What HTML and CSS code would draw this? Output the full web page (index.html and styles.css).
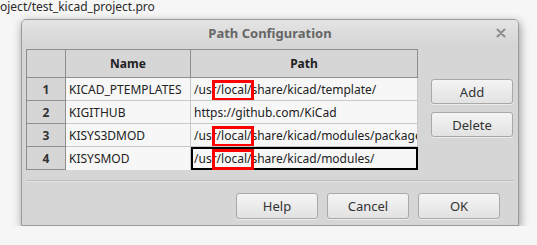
FILE: index.html
```html
<!DOCTYPE html>
<html lang="en">
<head>
    <meta charset="UTF-8">
    <title>Path Configuration</title>
    <link rel="stylesheet" href="styles.css">
</head>
<body>
    <div class="caption">oject/test_kicad_project.pro</div>
    <div class="dialog">
        <div class="titlebar">
            <span class="title">Path Configuration</span>
            <svg class="close" width="10" height="10" viewBox="0 0 10 10">
                <path d="M1.5 1.5 L8.5 8.5 M8.5 1.5 L1.5 8.5" stroke="#8c8c8c" stroke-width="2" stroke-linecap="round"/>
            </svg>
        </div>
        <div class="content">
            <div class="main">
                <table class="grid">
                    <thead>
                        <tr><th class="corner"></th><th class="col-name">Name</th><th class="col-path">Path</th></tr>
                    </thead>
                    <tbody>
                        <tr>
                            <th class="rownum">1</th>
                            <td>KICAD_PTEMPLATES</td>
                            <td class="path">/usr/local/share/kicad/template/<span class="mark"></span></td>
                        </tr>
                        <tr>
                            <th class="rownum">2</th>
                            <td>KIGITHUB</td>
                            <td class="path">https://github.com/KiCad</td>
                        </tr>
                        <tr>
                            <th class="rownum">3</th>
                            <td>KISYS3DMOD</td>
                            <td class="path">/usr/local/share/kicad/modules/packages3d/<span class="mark"></span></td>
                        </tr>
                        <tr>
                            <th class="rownum">4</th>
                            <td>KISYSMOD</td>
                            <td class="path selected">/usr/local/share/kicad/modules/<span class="mark"></span></td>
                        </tr>
                    </tbody>
                </table>
                <div class="side">
                    <button class="btn side-btn">Add</button>
                    <button class="btn side-btn">Delete</button>
                </div>
            </div>
            <div class="sep"></div>
            <div class="actions">
                <button class="btn">Help</button>
                <button class="btn">Cancel</button>
                <button class="btn">OK</button>
            </div>
        </div>
    </div>
</body>
</html>
```

FILE: styles.css
```css
body {
    margin: 0;
    background-color: #f6f6f6;
    font-family: 'Noto Sans', 'Open Sans', sans-serif;
    font-size: 12px;
    color: #222;
}
.caption {
    height: 19px;
    line-height: 14px;
    font-size: 12px;
    color: #2a2a2a;
    white-space: nowrap;
}
.dialog {
    width: 498px;
    height: 207px;
    margin-left: 21px;
    box-sizing: border-box;
    border: 1px solid #9a9a9a;
    border-radius: 5px 5px 0 0;
    background-color: #d6d6d6;
    box-shadow: 1px 3px 10px rgba(0, 0, 0, 0.4);
}
.titlebar {
    position: relative;
    height: 24px;
    display: flex;
    align-items: center;
    justify-content: center;
    border-radius: 4px 4px 0 0;
    background: linear-gradient(#e4e4e4, #d6d6d6);
}
.title {
    font-weight: bold;
    font-size: 13px;
    color: #666;
    margin-top: 1px;
}
.close {
    position: absolute;
    right: 12px;
    top: 8px;
}
.content {
    padding: 5px 0 0 4px;
}
.main {
    display: flex;
    gap: 13px;
}
.grid {
    border-collapse: collapse;
    table-layout: fixed;
    width: 392px;
}
.grid th,
.grid td {
    padding: 0 3px;
    white-space: nowrap;
    overflow: hidden;
    text-align: left;
}
.grid thead th {
    height: 27px;
    background-color: #d6d6d6;
    border: 1px solid #8e8e8e;
    text-align: center;
    font-weight: bold;
    color: #222;
}
.grid .corner {
    width: 32px;
}
.grid .col-name {
    width: 118px;
}
.grid tbody tr {
    height: 23px;
}
.grid .rownum {
    background-color: #d6d6d6;
    border: 1px solid #8e8e8e;
    text-align: center;
    font-weight: bold;
    color: #333;
}
.grid td {
    background-color: #f7f7f7;
    border: 1px solid #c9c9c9;
    border-top: none;
}
.grid tbody tr:last-child td {
    border-bottom: none;
}
.path {
    position: relative;
}
.path.selected {
    outline: 2px solid #000;
    outline-offset: -2px;
}
.mark {
    position: absolute;
    left: 21px;
    top: 2px;
    width: 36px;
    height: 15px;
    border: 3px solid #f00;
}
.side {
    display: flex;
    flex-direction: column;
    gap: 8px;
    padding-top: 30px;
}
.btn {
    width: 82px;
    height: 26px;
    font-family: inherit;
    font-size: 13px;
    color: #333;
    border: 1px solid #a9a9a9;
    border-radius: 3px;
    background: linear-gradient(#f4f4f4, #e2e2e2);
    box-shadow: 0 1px 0 rgba(255, 255, 255, 0.5);
    padding: 0;
}
.side-btn {
    height: 25px;
}
.sep {
    height: 1px;
    width: 488px;
    margin-top: 10px;
    background-color: #bdbdbd;
    border-bottom: 1px solid #e4e4e4;
}
.actions {
    display: flex;
    justify-content: flex-end;
    gap: 9px;
    padding-right: 18px;
    margin-top: 11px;
}
```
